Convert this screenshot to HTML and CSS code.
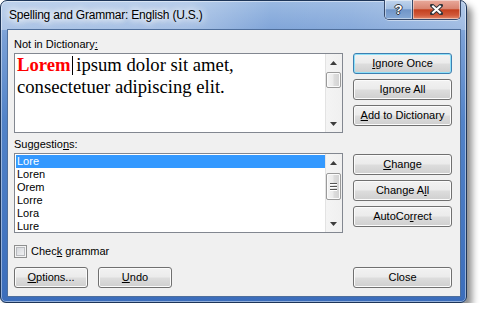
FILE: index.html
```html
<!DOCTYPE html>
<html>
<head>
<meta charset="utf-8">
<link rel="stylesheet" href="styles.css">
</head>
<body>
<div class="window">
  <div class="titlebar">
    <span class="title">Spelling and Grammar: English (U.S.)</span>
    <div class="caption">
      <div class="cap help">?</div>
      <div class="cap close">
        <svg width="13" height="11" viewBox="0 0 13 11"><path d="M2 1.5 L11 9.5 M11 1.5 L2 9.5" stroke="#30343a" stroke-width="4" stroke-linecap="round"/><path d="M2.3 1.8 L10.7 9.2 M10.7 1.8 L2.3 9.2" stroke="#fff" stroke-width="2.1" stroke-linecap="butt"/></svg>
      </div>
    </div>
  </div>
  <div class="client">
    <section class="group">
      <div class="label">Not in Dictionary<u>:</u></div>
      <div class="box">
        <div class="doc"><span class="err">Lorem</span><span class="caret"></span> ipsum dolor sit amet,<br>consectetuer adipiscing elit.</div>
        <div class="scrollbar">
          <div class="arrow"><svg width="7" height="4" viewBox="0 0 7 4"><path d="M0 4 L3.5 0 L7 4 Z" fill="#3c3c3c"/></svg></div>
          <div class="track"><div class="thumb small"></div></div>
          <div class="arrow"><svg width="7" height="4" viewBox="0 0 7 4"><path d="M0 0 L7 0 L3.5 4 Z" fill="#3c3c3c"/></svg></div>
        </div>
      </div>
      <div class="btn-col">
        <div class="btn default"><u>I</u>gnore Once</div>
        <div class="btn">I<u>g</u>nore All</div>
        <div class="btn"><u>A</u>dd to Dictionary</div>
      </div>
    </section>
    <section class="group second">
      <div class="label">Suggestio<u>n</u>s:</div>
      <div class="box">
        <div class="list">
          <div class="item selected">Lore</div>
          <div class="item">Loren</div>
          <div class="item">Orem</div>
          <div class="item">Lorre</div>
          <div class="item">Lora</div>
          <div class="item">Lure</div>
        </div>
        <div class="scrollbar">
          <div class="arrow"><svg width="7" height="4" viewBox="0 0 7 4"><path d="M0 4 L3.5 0 L7 4 Z" fill="#3c3c3c"/></svg></div>
          <div class="track"><div class="thumb big"><span></span><span></span><span></span></div></div>
          <div class="arrow"><svg width="7" height="4" viewBox="0 0 7 4"><path d="M0 0 L7 0 L3.5 4 Z" fill="#3c3c3c"/></svg></div>
        </div>
      </div>
      <div class="btn-col">
        <div class="btn"><u>C</u>hange</div>
        <div class="btn">Change A<u>l</u>l</div>
        <div class="btn">AutoCo<u>r</u>rect</div>
      </div>
    </section>
    <div class="check-row">
      <span class="check"></span>
      <span>Chec<u>k</u> grammar</span>
    </div>
    <div class="bottom-row">
      <div class="btn small-btn"><u>O</u>ptions...</div>
      <div class="btn small-btn"><u>U</u>ndo</div>
      <div class="btn close-btn">Close</div>
    </div>
  </div>
</div>
</body>
</html>
```
FILE: styles.css
```css
body {
  margin: 0;
  background: #fff;
  font-family: "Liberation Sans", Arial, sans-serif;
  font-size: 11px;
  color: #000;
}

.window {
  width: 467px;
  height: 303px;
  box-sizing: border-box;
  border: 1px solid #1d3558;
  border-radius: 7px 7px 6px 6px;
  padding: 0 5px 5px 6px;
  display: flex;
  flex-direction: column;
  background:
    linear-gradient(90deg, rgba(255,255,255,0.35) 0%, rgba(255,255,255,0.3) 40%, rgba(255,255,255,0) 58%, rgba(255,255,255,0.05) 75%, rgba(255,255,255,0.25) 100%) 0 0 / 100% 29px no-repeat,
    linear-gradient(180deg, #9ab9e2 0%, #7aa0d6 12%, #5283c8 40%, #3b6dbb 100%);
  box-shadow: 5px 6px 7px rgba(0,0,0,0.45), inset 0 0 0 1px rgba(255,255,255,0.45);
}

.titlebar {
  height: 28px;
  display: flex;
  justify-content: space-between;
  align-items: flex-start;
}

.title {
  margin-top: 7px;
  padding-left: 2px;
  font-size: 12px;
  line-height: 15px;
  letter-spacing: -0.2px;
  text-shadow: 0 0 6px #fff, 0 0 8px #fff, 0 0 10px rgba(255,255,255,0.9);
}

.caption {
  display: flex;
  margin-top: -1px;
  border: 1px solid #36496a;
  border-top: none;
  border-radius: 0 0 5px 5px;
  overflow: hidden;
  box-shadow: 0 1px 0 rgba(255,255,255,0.45);
}

.cap {
  height: 19px;
  display: flex;
  align-items: center;
  justify-content: center;
  box-shadow: inset 0 0 0 1px rgba(255,255,255,0.45);
}

.help {
  width: 27px;
  border-right: 1px solid #36496a;
  background: linear-gradient(180deg, #c0d4ec 0%, #a3bfe2 45%, #7095c8 52%, #86a9d6 100%);
  color: #fff;
  font-weight: bold;
  font-size: 13px;
  text-shadow: 1px 0 0 #30343a, -1px 0 0 #30343a, 0 1px 0 #30343a, 0 -1px 0 #30343a;
}

.close {
  width: 47px;
  background: linear-gradient(180deg, #e9aa9c 0%, #d98571 45%, #c4401f 52%, #d1593a 80%, #e38a6c 100%);
}

.client {
  flex: 1;
  border: 1px solid #4f6f9c;
  background: #f0f0f0;
  padding: 8px 8px 0 6px;
  display: flex;
  flex-direction: column;
}

.group {
  display: grid;
  grid-template-columns: 329px 99px;
  grid-template-rows: 13px 80px;
  column-gap: 10px;
  row-gap: 2px;
}

.group.second {
  margin-top: 5px;
}

.label {
  grid-column: 1 / 3;
  line-height: 13px;
}

.box {
  display: flex;
  border: 1px solid #828790;
  background: #fff;
}

.doc {
  flex: 1;
  padding-left: 2px;
  font-family: "Liberation Serif", "Times New Roman", serif;
  font-size: 18.67px;
  line-height: 22px;
  white-space: nowrap;
}

.err {
  color: #ff0000;
  font-weight: bold;
}

.caret {
  display: inline-block;
  width: 0;
  height: 19px;
  border-left: 1px solid #000;
  margin-left: 1px;
  margin-right: -1px;
  vertical-align: -4px;
}

.list {
  flex: 1;
  padding: 1px 0 0 1px;
}

.item {
  height: 13px;
  line-height: 13px;
  padding-left: 1px;
}

.item.selected {
  background: #3399ff;
  color: #fff;
}

.scrollbar {
  width: 17px;
  display: flex;
  flex-direction: column;
  background: linear-gradient(90deg, #e3e3e3 0, #e3e3e3 1px, #f4f4f4 1px, #f0f0f0 100%);
}

.arrow {
  height: 17px;
  display: flex;
  align-items: center;
  justify-content: center;
}

.track {
  flex: 1;
  padding-top: 1px;
}

.thumb {
  width: 15px;
  margin-left: 1px;
  box-sizing: border-box;
  border: 1px solid #9a9a9a;
  border-radius: 2px;
  background: linear-gradient(90deg, #f4f4f4 0%, #ebebeb 45%, #dcdcdc 55%, #d2d2d2 100%);
  box-shadow: inset 0 0 0 1px #fbfbfb;
}

.thumb.small {
  height: 16px;
}

.thumb.big {
  height: 27px;
  margin-top: 1px;
  display: flex;
  flex-direction: column;
  align-items: center;
  justify-content: center;
  gap: 1px;
}

.thumb.big span {
  width: 7px;
  height: 1px;
  background: #555;
  border-bottom: 1px solid #fff;
}

.btn-col {
  display: flex;
  flex-direction: column;
  gap: 5px;
}

.second .btn-col {
  padding-top: 1px;
}

.btn {
  height: 21px;
  box-sizing: border-box;
  border: 1px solid #707070;
  border-radius: 3px;
  background: linear-gradient(180deg, #f2f2f2 0%, #ebebeb 48%, #dddddd 52%, #cfcfcf 100%);
  box-shadow: inset 0 0 0 1px #fbfbfb;
  display: flex;
  align-items: center;
  justify-content: center;
  line-height: 13px;
}

.btn.default {
  border-color: #3c7fb1;
  box-shadow: inset 0 0 0 1px #8ee0f8;
}

.check-row {
  margin-top: 12px;
  height: 13px;
  display: flex;
  align-items: center;
  gap: 4px;
  line-height: 13px;
}

.check {
  width: 13px;
  height: 13px;
  box-sizing: border-box;
  border: 1px solid #8e8f8f;
  background: linear-gradient(135deg, #cfd2d7 0%, #f6f6f7 100%);
  box-shadow: inset 0 0 0 1px #f4f4f4, inset 0 0 0 2px #b9bbbf;
}

.bottom-row {
  margin-top: 9px;
  display: flex;
  gap: 10px;
}

.small-btn {
  width: 74px;
}

.close-btn {
  width: 99px;
  margin-left: auto;
}
```
